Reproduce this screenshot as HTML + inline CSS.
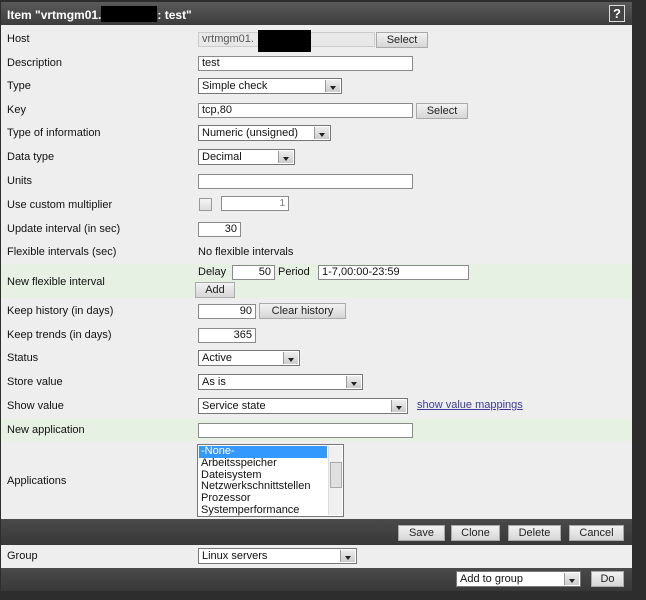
<!DOCTYPE html><html><head><style>
body{margin:0;width:646px;height:600px;background:#2d2d2d;position:relative;overflow:hidden;font-family:"Liberation Sans","DejaVu Sans",sans-serif;font-size:11px;color:#111}
.a{position:absolute}
.row{position:absolute;left:1px;width:631px;background:#eeeeee}
.g{background:#e6f1e4}
.lb{position:absolute;left:7px}
.in{position:absolute;background:#fff;border:1px solid #8a8a8a;height:13px;box-sizing:border-box;height:15px;line-height:13px;padding:0 3px;font-size:11px}
.r{text-align:right}
.btn{position:absolute;background:linear-gradient(#f2f2f2,#d6d6d6);border:1px solid #aaa;box-sizing:border-box;height:16px;line-height:14px;text-align:center;font-size:11px;color:#222}
.sel{position:absolute;background:#fff;border:1px solid #777;box-sizing:border-box;height:16px;line-height:14px;padding-left:3px}
.sel:after{content:"";position:absolute;right:1px;top:1px;width:14px;height:12px;background:linear-gradient(#eee,#ccc);border-left:1px solid #999}
.sel:before{content:"";position:absolute;right:5px;top:7px;border:3px solid transparent;border-top:4px solid #222;z-index:2}
.bar{position:absolute;left:1px;width:631px;background:linear-gradient(#4a4a4a,#383838)}
</style></head><body>
<div class="bar" style="top:2px;height:23px;background:linear-gradient(#5a5a5a,#3c3c3c)"></div>
<div class="a" style="left:7px;top:6px;color:#fff;font-weight:bold;font-size:12px">Item "vrtmgm01.<span style="display:inline-block;width:56px;height:16px;background:#000;vertical-align:-3px"></span>: test"</div>
<div class="a" style="left:609px;top:5px;width:14px;height:15px;border:1px solid #ddd;background:#444;color:#fff;font-weight:bold;font-size:13px;text-align:center;line-height:15px">?</div>
<div class="row" style="top:25px;height:239px"></div>
<div class="row g" style="top:264px;height:34px"></div>
<div class="row" style="top:298px;height:121px"></div>
<div class="row g" style="top:419px;height:22px"></div>
<div class="row" style="top:441px;height:78px"></div>
<div class="lb" style="top:33px">Host</div>
<div class="in" style="left:198px;top:32px;width:177px;background:#e8e8e8;border-color:#ccc;color:#555">vrtmgm01.</div>
<div class="a" style="left:258px;top:30px;width:53px;height:22px;background:#000"></div>
<div class="btn" style="left:376px;top:32px;width:52px">Select</div>
<div class="lb" style="top:57px">Description</div>
<div class="in" style="left:198px;top:56px;width:215px">test</div>
<div class="lb" style="top:80px">Type</div>
<div class="sel" style="left:198px;top:78px;width:144px">Simple check</div>
<div class="lb" style="top:104px">Key</div>
<div class="in" style="left:198px;top:103px;width:215px">tcp,80</div>
<div class="btn" style="left:416px;top:103px;width:52px">Select</div>
<div class="lb" style="top:127px">Type of information</div>
<div class="sel" style="left:198px;top:125px;width:133px">Numeric (unsigned)</div>
<div class="lb" style="top:151px">Data type</div>
<div class="sel" style="left:198px;top:149px;width:97px">Decimal</div>
<div class="lb" style="top:175px">Units</div>
<div class="in" style="left:198px;top:174px;width:215px"></div>
<div class="lb" style="top:199px">Use custom multiplier</div>
<div class="a" style="left:199px;top:198px;width:11px;height:11px;border:1px solid #999;background:linear-gradient(#f4f4f4,#ddd)"></div>
<div class="in r" style="left:221px;top:196px;width:68px;color:#777;font-size:10px">1</div>
<div class="lb" style="top:223px">Update interval (in sec)</div>
<div class="in r" style="left:198px;top:222px;width:43px">30</div>
<div class="lb" style="top:246px">Flexible intervals (sec)</div>
<div class="a" style="left:198px;top:246px">No flexible intervals</div>
<div class="lb" style="top:276px">New flexible interval</div>
<div class="a" style="left:198px;top:266px">Delay</div>
<div class="in r" style="left:232px;top:265px;width:43px">50</div>
<div class="a" style="left:278px;top:266px">Period</div>
<div class="in" style="left:318px;top:265px;width:151px">1-7,00:00-23:59</div>
<div class="btn" style="left:195px;top:282px;width:40px">Add</div>
<div class="lb" style="top:305px">Keep history (in days)</div>
<div class="in r" style="left:198px;top:304px;width:58px">90</div>
<div class="btn" style="left:259px;top:303px;width:87px">Clear history</div>
<div class="lb" style="top:329px">Keep trends (in days)</div>
<div class="in r" style="left:198px;top:328px;width:58px">365</div>
<div class="lb" style="top:352px">Status</div>
<div class="sel" style="left:198px;top:350px;width:102px">Active</div>
<div class="lb" style="top:376px">Store value</div>
<div class="sel" style="left:198px;top:374px;width:165px">As is</div>
<div class="lb" style="top:400px">Show value</div>
<div class="sel" style="left:198px;top:398px;width:210px">Service state</div>
<div class="a" style="left:417px;top:399px;color:#3b3b9b;text-decoration:underline">show value mappings</div>
<div class="lb" style="top:424px">New application</div>
<div class="in" style="left:198px;top:423px;width:215px"></div>
<div class="lb" style="top:475px">Applications</div>
<div class="a" style="left:197px;top:444px;width:147px;height:73px;background:#fff;border:1px solid #777;box-sizing:border-box;line-height:11.8px;font-size:11px">
<div style="background:#3399ff;color:#fff;margin:1px 16px 0 1px;padding-left:2px">-None-</div>
<div style="padding-left:3px">Arbeitsspeicher<br>Dateisystem<br>Netzwerkschnittstellen<br>Prozessor<br>Systemperformance</div>
<div class="a" style="right:1px;top:1px;width:13px;height:69px;background:#f0f0f0;border-left:1px solid #ddd"><div class="a" style="left:1px;top:16px;width:10px;height:24px;background:#e0e0e0;border:1px solid #aaa"></div></div>
</div>
<div class="bar" style="top:519px;height:26px"></div>
<div class="btn" style="left:398px;top:525px;width:47px">Save</div>
<div class="btn" style="left:451px;top:525px;width:49px">Clone</div>
<div class="btn" style="left:508px;top:525px;width:53px">Delete</div>
<div class="btn" style="left:569px;top:525px;width:55px">Cancel</div>
<div class="row" style="top:545px;height:23px"></div>
<div class="lb" style="top:550px">Group</div>
<div class="sel" style="left:198px;top:548px;width:159px">Linux servers</div>
<div class="bar" style="top:568px;height:23px"></div>
<div class="sel" style="left:456px;top:571px;width:125px">Add to group</div>
<div class="btn" style="left:591px;top:571px;width:33px">Do</div>
</body></html>
